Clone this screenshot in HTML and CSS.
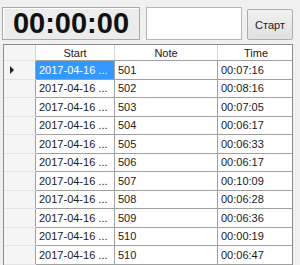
FILE: index.html
```html
<!DOCTYPE html>
<html lang="en">
<head>
  <meta charset="UTF-8" />
  <title>Timer</title>
  <link rel="stylesheet" href="styles.css">
</head>
<body>
  <div class="window">
    <div class="toolbar">
      <div class="clock">00:00:00</div>
      <input class="note-input" type="text" value="">
      <button class="start-btn">Старт</button>
    </div>

    <div class="grid">
      <table>
        <thead>
          <tr>
            <th class="row-head"></th>
            <th class="col-start">Start</th>
            <th class="col-note">Note</th>
            <th class="col-time">Time</th>
          </tr>
        </thead>
        <tbody>
          <tr class="current">
            <td class="row-head"><span class="arrow"></span></td>
            <td class="selected">2017-04-16 ...</td>
            <td>501</td>
            <td>00:07:16</td>
          </tr>
          <tr><td class="row-head"></td><td>2017-04-16 ...</td><td>502</td><td>00:08:16</td></tr>
          <tr><td class="row-head"></td><td>2017-04-16 ...</td><td>503</td><td>00:07:05</td></tr>
          <tr><td class="row-head"></td><td>2017-04-16 ...</td><td>504</td><td>00:06:17</td></tr>
          <tr><td class="row-head"></td><td>2017-04-16 ...</td><td>505</td><td>00:06:33</td></tr>
          <tr><td class="row-head"></td><td>2017-04-16 ...</td><td>506</td><td>00:06:17</td></tr>
          <tr><td class="row-head"></td><td>2017-04-16 ...</td><td>507</td><td>00:10:09</td></tr>
          <tr><td class="row-head"></td><td>2017-04-16 ...</td><td>508</td><td>00:06:28</td></tr>
          <tr><td class="row-head"></td><td>2017-04-16 ...</td><td>509</td><td>00:06:36</td></tr>
          <tr><td class="row-head"></td><td>2017-04-16 ...</td><td>510</td><td>00:00:19</td></tr>
          <tr><td class="row-head"></td><td>2017-04-16 ...</td><td>510</td><td>00:06:47</td></tr>
        </tbody>
      </table>
    </div>
  </div>
</body>
</html>
```

FILE: styles.css
```css
html, body {
  margin: 0;
  height: 100%;
  overflow: hidden;
}

body {
  font-family: "Liberation Sans", Arial, sans-serif;
  font-size: 11px;
  color: #1a1a1a;
  background: #f0f0f0;
}

.window {
  padding: 7px 0 0 2px;
}

.toolbar {
  display: flex;
  align-items: flex-start;
  height: 37px;
}

.clock {
  width: 136px;
  height: 31px;
  border: 1px solid #a9a9a9;
  background: #ececec;
  font-size: 29px;
  font-weight: bold;
  line-height: 31px;
  text-align: center;
  color: #111;
  box-shadow: inset 1px 1px 0 #fff;
}

.note-input {
  margin: 0 0 0 6px;
  width: 96px;
  height: 33px;
  padding: 0;
  border: 1px solid #b5b5b5;
  background: #fff;
  box-sizing: border-box;
}

.start-btn {
  margin: 2px 0 0 5px;
  width: 46px;
  height: 31px;
  padding: 0;
  border: 1px solid #adadad;
  border-radius: 2px;
  background: linear-gradient(#f2f2f2, #e0e0e0);
  font-family: "Liberation Sans", Arial, sans-serif;
  font-size: 11px;
  color: #222;
}

.grid {
  margin-left: 1px;
  width: 288px;
  height: 221px;
  border: 1px solid #8c8c8c;
  border-bottom: none;
  background: #fff;
  overflow: hidden;
}

table {
  border-collapse: collapse;
  table-layout: fixed;
  width: 288px;
}

th {
  height: 15px;
  padding: 0;
  font-weight: normal;
  text-align: center;
  background: #fff;
  border-right: 1px solid #d5d5d5;
  border-bottom: 1px solid #a0a0a0;
}

td {
  height: 17.5px;
  padding: 0 0 0 3px;
  border-right: 1px solid #a0a0a0;
  border-bottom: 1px solid #a0a0a0;
  white-space: nowrap;
  overflow: hidden;
}

th.row-head,
td.row-head {
  width: 31px;
  padding: 0;
  background: #f5f5f5;
  border-bottom-color: #e4e4e4;
}

.col-start { width: 78px; }
.col-note { width: 102px; }
.col-time { width: 76px; }

th:last-child,
td:last-child {
  border-right: none;
}

td.selected {
  background: #3399ff;
  color: #fff;
}

.arrow {
  display: block;
  margin-left: 6px;
  width: 0;
  height: 0;
  border-top: 4px solid transparent;
  border-bottom: 4px solid transparent;
  border-left: 4px solid #222;
}
```
